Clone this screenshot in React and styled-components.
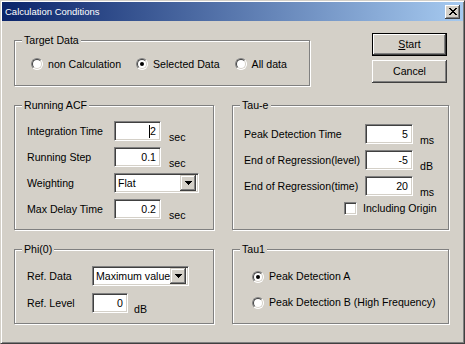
import React from 'react';
import styled, { createGlobalStyle } from 'styled-components';

const Global = createGlobalStyle`
  html, body { margin: 0; padding: 0; background: #d4d0c8; }
  body {
    font-family: "Liberation Sans", Arial, sans-serif;
    font-size: 10.6px;
    color: #000;
  }
  * { box-sizing: border-box; }
`;

const Window = styled.div`
  width: 465px;
  height: 344px;
  background: #d4d0c8;
  border: 1px solid;
  border-color: #d4d0c8 #404040 #404040 #d4d0c8;
  box-shadow: inset 1px 1px 0 #fff, inset -1px -1px 0 #808080;
  padding: 1px;
  display: flex;
  flex-direction: column;
`;

const TitleBar = styled.div`
  height: 19px;
  flex: none;
  background: linear-gradient(to right, #0a246a, #a6caf0);
  display: flex;
  align-items: center;
  justify-content: space-between;
  padding: 0 3px 0 3px;
  color: #fff;
  font-size: 9.5px;
`;

const CloseButton = styled.div`
  width: 15px;
  height: 14px;
  background: #d4d0c8;
  box-shadow: inset -1px -1px 0 #404040, inset 1px 1px 0 #fff,
    inset -2px -2px 0 #808080, inset 2px 2px 0 #d4d0c8;
  display: flex;
  align-items: center;
  justify-content: center;
  padding-bottom: 1px;
`;

const Body = styled.div`
  display: flex;
  flex-direction: column;
  gap: 19px;
  padding: 12px 13px 0 12px;
`;

const Row = styled.div`
  display: flex;
  align-items: flex-start;
  gap: 18px;
`;

const Group = styled.div`
  position: relative;
  flex: none;
  width: ${(p) => p.$w}px;
  height: ${(p) => p.$h}px;
  margin-top: ${(p) => p.$mt || 0}px;
  border: 1px solid #808080;
  box-shadow: inset 1px 1px 0 #fff, 1px 1px 0 #fff;
`;

const Legend = styled.span`
  position: absolute;
  top: -7px;
  left: 7px;
  padding: 0 2px;
  line-height: 13px;
  background: #d4d0c8;
`;

const ButtonCol = styled.div`
  margin-left: auto;
  margin-right: 3px;
  display: flex;
  flex-direction: column;
  gap: 4px;
`;

const PushButton = styled.div`
  width: 75px;
  height: 23px;
  display: flex;
  align-items: center;
  justify-content: center;
  background: #d4d0c8;
  border: ${(p) => (p.$default ? '1px solid #000' : 'none')};
  box-shadow: inset -1px -1px 0 #404040, inset 1px 1px 0 #fff,
    inset -2px -2px 0 #808080, inset 2px 2px 0 #d4d0c8;
  padding-bottom: 1px;
  u { text-decoration: underline; }
`;

const RadioRow = styled.div`
  display: flex;
  align-items: center;
  height: 100%;
  padding: 2px 0 0 16px;
  gap: 15px;
`;

const RadioCol = styled.div`
  display: flex;
  flex-direction: column;
  gap: 13px;
  padding: 20px 0 0 19px;
`;

const Option = styled.label`
  display: flex;
  align-items: center;
  gap: 5px;
  line-height: 13px;
  white-space: nowrap;
`;

const RadioCircle = styled.span`
  position: relative;
  flex: none;
  width: 12px;
  height: 12px;
  border-radius: 50%;
  background: #fff;
  border: 1px solid;
  border-color: #808080 #fff #fff #808080;
  &::before {
    content: '';
    position: absolute;
    inset: 0;
    border-radius: 50%;
    border: 1px solid;
    border-color: #404040 #d4d0c8 #d4d0c8 #404040;
  }
  &::after {
    content: '';
    display: ${(p) => (p.$checked ? 'block' : 'none')};
    position: absolute;
    left: 3px;
    top: 3px;
    width: 4px;
    height: 4px;
    border-radius: 50%;
    background: #000;
  }
`;

const CheckBox = styled.span`
  flex: none;
  width: 13px;
  height: 13px;
  background: #fff;
  border: 1px solid;
  border-color: #808080 #fff #fff #808080;
  box-shadow: inset 1px 1px 0 #404040, inset -1px -1px 0 #d4d0c8;
`;

const FieldGrid = styled.div`
  display: grid;
  grid-template-columns: ${(p) => p.$cols};
  row-gap: ${(p) => p.$gap}px;
  padding: ${(p) => p.$pt}px 0 0 ${(p) => p.$pl}px;
  align-items: center;
`;

const Label = styled.span`
  white-space: nowrap;
  line-height: 13px;
`;

const Unit = styled.span`
  align-self: end;
  margin-left: ${(p) => p.$ml}px;
  line-height: 12px;
  margin-bottom: -2px;
`;

const sunken = `
  background: #fff;
  border: 1px solid;
  border-color: #808080 #fff #fff #808080;
  box-shadow: inset 1px 1px 0 #404040, inset -1px -1px 0 #d4d0c8;
`;

const TextField = styled.div`
  ${sunken}
  width: ${(p) => p.$w}px;
  height: ${(p) => p.$h}px;
  display: flex;
  align-items: center;
  justify-content: flex-end;
  padding-right: 4px;
  line-height: 13px;
`;

const Caret = styled.span`
  width: 1px;
  height: 13px;
  background: #000;
`;

const Select = styled.div`
  ${sunken}
  grid-column: span 2;
  width: ${(p) => p.$w}px;
  height: 20px;
  display: flex;
  align-items: center;
  padding: 2px 2px 2px 3px;
`;

const SelectText = styled.span`
  flex: 1;
  line-height: 13px;
  white-space: nowrap;
  overflow: hidden;
`;

const ArrowButton = styled.span`
  width: 16px;
  height: 16px;
  flex: none;
  background: #d4d0c8;
  box-shadow: inset -1px -1px 0 #404040, inset 1px 1px 0 #d4d0c8,
    inset -2px -2px 0 #808080, inset 2px 2px 0 #fff;
  display: flex;
  align-items: center;
  justify-content: center;
`;

const CheckRow = styled.label`
  grid-column: 1 / -1;
  display: flex;
  align-items: center;
  gap: 6px;
  margin: 0 0 0 100px;
  line-height: 13px;
`;

const CloseIcon = () => (
  <svg width="8" height="7" viewBox="0 0 8 7" shapeRendering="crispEdges">
    <path d="M0 0h2l2 2.4L6 0h2L5 3.5 8 7H6L4 4.6 2 7H0l3-3.5z" fill="#000" />
  </svg>
);

const DownArrow = () => (
  <svg width="7" height="4" viewBox="0 0 7 4" shapeRendering="crispEdges">
    <path d="M0 0h7L3.5 4z" fill="#000" />
  </svg>
);

const Radio = ({ checked, children }) => (
  <Option>
    <RadioCircle $checked={checked} />
    {children}
  </Option>
);

const Combo = ({ w, value }) => (
  <Select $w={w}>
    <SelectText>{value}</SelectText>
    <ArrowButton>
      <DownArrow />
    </ArrowButton>
  </Select>
);

export default function App() {
  return (
    <>
      <Global />
      <Window>
        <TitleBar>
          <span>Calculation Conditions</span>
          <CloseButton>
            <CloseIcon />
          </CloseButton>
        </TitleBar>
        <Body>
          <Row>
            <Group $w={296} $h={46} $mt={7}>
              <Legend>Target Data</Legend>
              <RadioRow>
                <Radio>non Calculation</Radio>
                <Radio checked>Selected Data</Radio>
                <Radio>All data</Radio>
              </RadioRow>
            </Group>
            <ButtonCol>
              <PushButton $default>
                <span><u>S</u>tart</span>
              </PushButton>
              <PushButton>Cancel</PushButton>
            </ButtonCol>
          </Row>

          <Row>
            <Group $w={200} $h={125}>
              <Legend>Running ACF</Legend>
              <FieldGrid $cols="87px 47px auto" $gap={6} $pt={15} $pl={12}>
                <Label>Integration Time</Label>
                <TextField $w={47} $h={20}>
                  <Caret />2
                </TextField>
                <Unit $ml={8}>sec</Unit>
                <Label>Running Step</Label>
                <TextField $w={47} $h={20}>0.1</TextField>
                <Unit $ml={8}>sec</Unit>
                <Label>Weighting</Label>
                <Combo w={85} value="Flat" />
                <Label>Max Delay Time</Label>
                <TextField $w={47} $h={20}>0.2</TextField>
                <Unit $ml={8}>sec</Unit>
              </FieldGrid>
            </Group>
            <Group $w={217} $h={125}>
              <Legend>Tau-e</Legend>
              <FieldGrid $cols="121px 48px auto" $gap={6} $pt={18} $pl={11}>
                <Label>Peak Detection Time</Label>
                <TextField $w={48} $h={20}>5</TextField>
                <Unit $ml={7}>ms</Unit>
                <Label>End of Regression(level)</Label>
                <TextField $w={48} $h={20}>-5</TextField>
                <Unit $ml={7}>dB</Unit>
                <Label>End of Regression(time)</Label>
                <TextField $w={48} $h={20}>20</TextField>
                <Unit $ml={7}>ms</Unit>
                <CheckRow>
                  <CheckBox />
                  Including Origin
                </CheckRow>
              </FieldGrid>
            </Group>
          </Row>

          <Row>
            <Group $w={200} $h={75}>
              <Legend>Phi(0)</Legend>
              <FieldGrid $cols="65px 36px auto" $gap={7} $pt={16} $pl={12}>
                <Label>Ref. Data</Label>
                <Combo w={97} value="Maximum value" />
                <Label>Ref. Level</Label>
                <TextField $w={36} $h={20}>0</TextField>
                <Unit $ml={6}>dB</Unit>
              </FieldGrid>
            </Group>
            <Group $w={217} $h={75}>
              <Legend>Tau1</Legend>
              <RadioCol>
                <Radio checked>Peak Detection A</Radio>
                <Radio>Peak Detection B (High Frequency)</Radio>
              </RadioCol>
            </Group>
          </Row>
        </Body>
      </Window>
    </>
  );
}
